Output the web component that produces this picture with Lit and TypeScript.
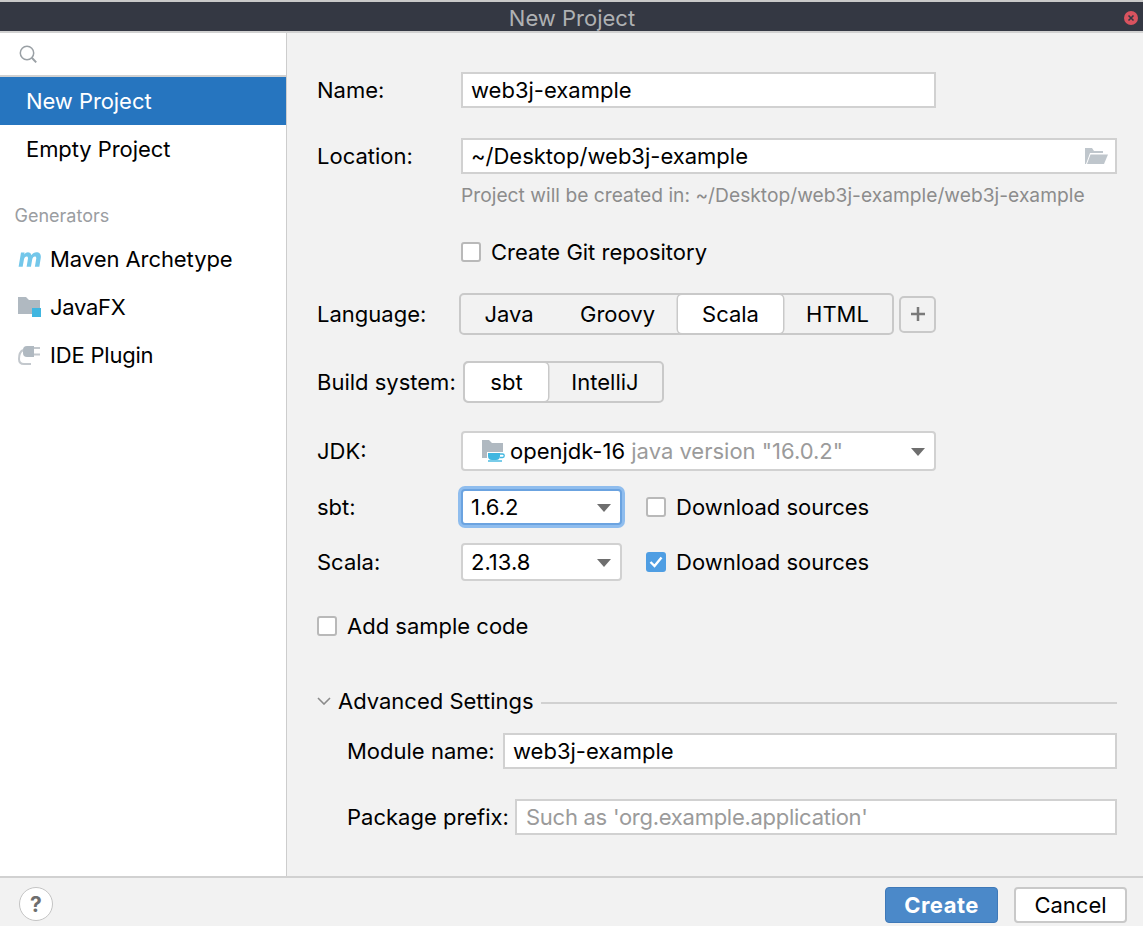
import { LitElement, html, css } from "lit";
import { customElement } from "lit/decorators.js";

const caret = html`<svg class="caret" width="14" height="8" viewBox="0 0 14 8"><path d="M0 0h14L7 8z" fill="#6e6e6e"/></svg>`;

@customElement("app-root")
export class AppRoot extends LitElement {
  static styles = css`
    :host { display: block; width: 1143px; height: 926px; overflow: hidden; background: #f2f2f2; font-family: Inter, "Noto Sans", sans-serif; font-size: 22px; color: #000; position: relative; }
    * { box-sizing: border-box; }
    .top { height: 2px; background: #c9c9c9; }
    .title { height: 29px; background: #343843; color: #afb1b3; display: flex; align-items: center; justify-content: center; font-size: 22px; position: relative; padding: 3px 0 0 1px; }
    .close { position: absolute; left: 1124px; top: 9px; width: 14px; height: 14px; }
    .titleline { height: 2px; background: #d1d1d1; }
    .body { display: flex; height: 843px; }
    .side { width: 287px; background: #fff; border-right: 1px solid #cdcdcd; flex: none; }
    .search { height: 44px; border-bottom: 2px solid #d1d1d1; display: flex; align-items: center; padding: 0 0 0 19px; }
    .item { height: 48px; display: flex; align-items: center; padding-left: 26px; letter-spacing: -0.07px; }
    .item.sel { background: #2675bf; color: #fff; }
    .gen { color: #9a9da1; font-size: 18px; height: 24px; line-height: 24px; margin: 31px 0 7px 14.5px; }
    .item.g { padding-left: 18px; gap: 9px; }
    .item.fx { letter-spacing: -0.3px; }
    .item.pl { letter-spacing: -0.2px; }
    .item svg { flex: none; }
    .main { flex: 1; padding: 39px 26px 0 30px; display: flex; flex-direction: column; }
    .row { display: flex; align-items: center; }
    .lbl { flex: none; }
    .w144 { width: 144px; }
    .field { background: #fff; border: 2px solid #d1d1d1; height: 36px; display: flex; align-items: center; padding-left: 8px; }
    .ph { color: #9b9b9b; }
    .tight { letter-spacing: -0.27px; padding-left: 9px; }
    .hint { color: #8c8c8c; font-size: 19.2px; height: 24px; line-height: 24px; margin: 9px 0 0 144px; letter-spacing: 0.02px; }
    .check { width: 20px; height: 20px; background: #fff; border: 2px solid #b9b9b9; border-radius: 3px; flex: none; }
    .check.on { background: #4f9ee3; border: 0; display: flex; align-items: center; justify-content: center; }
    .seg { display: flex; height: 42px; background: #f2f2f2; border: 2px solid #c9c9c9; border-radius: 5px; }
    .seg div { display: flex; align-items: center; justify-content: center; }
    .seg .on { background: #fff; border-radius: 4px; box-shadow: 0 0 0 1.5px #c9c9c9; }
    .plus { width: 37px; height: 37px; margin-left: 5px; border: 2px solid #c9c9c9; border-radius: 5px; display: flex; align-items: center; justify-content: center; }
    .combo { background: #fff; border: 2px solid #d1d1d1; border-radius: 4px; display: flex; align-items: center; position: relative; }
    .caret { position: absolute; right: 9px; top: 50%; margin-top: -3px; }
    .focus { box-shadow: 0 0 0 3px #8fbdee; border-color: #6ba3e0; }
    .dl { gap: 10px; margin-left: 24px; }
    .adv { flex: 1; height: 2px; background: #d1d1d1; margin: 4px 0 0 7px; }
    .foot { height: 50px; border-top: 2px solid #d1d1d1; display: flex; align-items: flex-start; padding: 9px 16px 0 19px; }
    .help { width: 34px; height: 34px; border-radius: 50%; background: #fff; border: 1px solid #c4c4c4; display: flex; align-items: center; justify-content: center; color: #6e6e6e; font-weight: 700; font-size: 21px; }
    .spacer { flex: 1; }
    .btn { width: 113px; height: 36px; border-radius: 4px; display: flex; align-items: center; justify-content: center; }
    .create { background: #4b89c9; border: 1px solid #3f79b8; color: #fff; font-weight: 700; margin-right: 16px; letter-spacing: .5px; }
    .cancel { background: #fff; border: 2px solid #c9c9c9; }
  `;

  render() {
    return html`
      <div class="top"></div>
      <div class="title">New Project
        <svg class="close" viewBox="0 0 14 14"><circle cx="7" cy="7" r="7" fill="#d9535f"/><path d="M4.500 4.500l5 5M9.500 4.500l-5 5" stroke="#343843" stroke-width="1.600"/></svg>
      </div>
      <div class="titleline"></div>
      <div class="body">
        <div class="side">
          <div class="search">
            <svg width="18" height="19" viewBox="0 0 18 19" fill="none"><circle cx="8" cy="8" r="6.700" stroke="#9aa0a5" stroke-width="1.500"/><path d="M12.800 12.800l4.400 4.600" stroke="#9aa0a5" stroke-width="2"/></svg>
          </div>
          <div class="item sel">New Project</div>
          <div class="item">Empty Project</div>
          <div class="gen">Generators</div>
          <div class="item g">
            <svg width="23" height="15" viewBox="1.500 4.600 19.200 10.500" preserveAspectRatio="none"><path d="M2 15L4 5h3l-.3 1.400C8 4.800 10 4.500 11.300 5.200c.8.400 1.200 1 1.300 1.700C14 5 16.500 4.300 18.500 5c1.800.7 2.300 2.200 2 3.800L19.300 15h-3.700l1.100-5.600c.2-1-.2-1.600-1.100-1.600-1 0-2 .8-2.200 1.900L12.300 15H8.700l1.100-5.600c.2-1-.2-1.600-1.100-1.600-1 0-2 .8-2.200 1.900L5.400 15z" fill="#73c7ea"/></svg>
            Maven Archetype
          </div>
          <div class="item g fx">
            <svg width="23" height="22" viewBox="0 0 23 22"><path d="M0 1h8l3 3h11v8h-8v6H0z" fill="#b0b9c1"/><rect x="14" y="12" width="9" height="9" fill="#40b6e0"/></svg>
            JavaFX
          </div>
          <div class="item g pl">
            <svg width="23" height="22" viewBox="0 0 23 22" fill="none"><path d="M9 2h7v11H9a4 4 0 0 1-4-4V6a4 4 0 0 1 4-4z" fill="#b0b9c1"/><path d="M16 4h6M16 10.500h6" stroke="#c3c8cd" stroke-width="2"/><path d="M5 6C1 8 1 12 1 15c0 3 2 5 5 5h7" stroke="#c3c8cd" stroke-width="2"/></svg>
            IDE Plugin
          </div>
        </div>
        <div class="main">
          <div class="row" style="height:36px"><span class="lbl w144">Name:</span><div class="field" style="width:475px">web3j-example</div></div>
          <div class="row" style="margin-top:30px;height:36px"><span class="lbl w144">Location:</span>
            <div class="field" style="flex:1;justify-content:space-between;padding-right:7px">~/Desktop/web3j-example
              <svg width="23" height="18" viewBox="0 0 23 18"><path d="M0 17V1h7l2 3h9v2H5L1 17z" fill="#bfc6cc"/><path d="M5.500 7.500H23L19 17H2z" fill="#bfc6cc"/></svg>
            </div></div>
          <div class="hint">Project will be created in: ~/Desktop/web3j-example/web3j-example</div>
          <div class="row" style="margin-top:33px;height:24px;padding-left:144px;gap:10px"><div class="check"></div>Create Git repository</div>
          <div class="row" style="margin-top:29px"><span class="lbl" style="width:142px">Language:</span>
            <div class="seg" style="width:435px"><div style="width:96px">Java</div><div style="width:121px">Groovy</div><div class="on" style="width:105px">Scala</div><div style="flex:1">HTML</div></div>
            <div class="plus"><svg width="16" height="16" viewBox="0 0 16 16"><path d="M8 1v14M1 8h14" stroke="#7a7a7a" stroke-width="2.500"/></svg></div>
          </div>
          <div class="row" style="margin-top:26px"><span class="lbl" style="width:146px">Build system:</span>
            <div class="seg" style="width:201px"><div class="on" style="width:83px">sbt</div><div style="flex:1">IntelliJ</div></div>
          </div>
          <div class="row" style="margin-top:28px"><span class="lbl w144">JDK:</span>
            <div class="combo" style="width:475px;height:40px;padding-left:19px;gap:5px">
              <svg width="23" height="22" viewBox="0 0 23 22"><path d="M0 0h7l3 3h11v15H0z" fill="#b0b9c1"/><path d="M5 12h18v10H5z" fill="#fff"/><path d="M6 13h12v3a4 4 0 0 1-4 4h-4a4 4 0 0 1-4-4z" fill="#40b6e0"/><path d="M18 14h2.500a1.500 1.500 0 0 1 0 3.500H18" stroke="#40b6e0" stroke-width="1.300" fill="none"/><path d="M6 21h14" stroke="#40b6e0" stroke-width="1.400"/></svg>
              <span>openjdk-16 <span class="ph">java version "16.0.2"</span></span>
              ${caret}
            </div>
          </div>
          <div class="row" style="margin-top:18px"><span class="lbl w144">sbt:</span>
            <div class="combo focus" style="width:161px;height:36px;padding-left:8px">1.6.2${caret}</div>
            <div class="row dl"><div class="check"></div>Download sources</div>
          </div>
          <div class="row" style="margin-top:18px"><span class="lbl w144">Scala:</span>
            <div class="combo" style="width:161px;height:38px;padding-left:8px">2.13.8${caret}</div>
            <div class="row dl"><div class="check on"><svg width="14" height="12" viewBox="0 0 14 12" fill="none"><path d="M1.500 6l4 4 7-8.500" stroke="#fff" stroke-width="2.400"/></svg></div>Download sources</div>
          </div>
          <div class="row" style="margin-top:32px;height:26px;gap:10px"><div class="check"></div>Add sample code</div>
          <div class="row" style="margin-top:49px;height:26px">
            <svg width="14" height="8" viewBox="0 0 14 8" fill="none" style="margin-right:7px"><path d="M1 1l6 6 6-6" stroke="#8b8b8b" stroke-width="1.600"/></svg>
            Advanced Settings<div class="adv"></div>
          </div>
          <div class="row" style="margin-top:19px;padding-left:30px"><span class="lbl" style="width:156px">Module name:</span><div class="field" style="flex:1">web3j-example</div></div>
          <div class="row" style="margin-top:30px;padding-left:30px"><span class="lbl" style="width:168px">Package prefix:</span><div class="field ph tight" style="flex:1">Such as 'org.example.application'</div></div>
        </div>
      </div>
      <div class="foot">
        <div class="help">?</div>
        <div class="spacer"></div>
        <div class="btn create">Create</div>
        <div class="btn cancel">Cancel</div>
      </div>
    `;
  }
}
